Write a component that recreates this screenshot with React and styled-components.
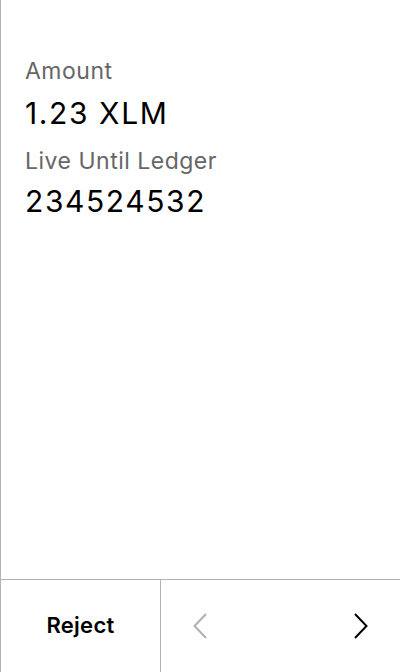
import React from "react";
import styled, { createGlobalStyle } from "styled-components";

const Global = createGlobalStyle`
  html, body { margin: 0; padding: 0; background: #fff; }
  body { font-family: Inter, "Noto Sans", sans-serif; }
`;

const Screen = styled.div`
  width: 400px;
  height: 672px;
  box-sizing: border-box;
  border-left: 1px solid #b3b3b3;
  display: flex;
  flex-direction: column;
  background: #fff;
`;

const Content = styled.div`
  flex: 1;
  padding: 57px 0 0 24px;
  display: flex;
  flex-direction: column;
`;

const Label = styled.div`
  font-size: 23px;
  line-height: 28px;
  letter-spacing: 0.5px;
  color: #666;
  margin-bottom: ${(p) => p.$gap || 0}px;
`;

const Value = styled.div`
  font-size: 30px;
  line-height: 36px;
  letter-spacing: 1.6px;
  color: #000;
  margin-bottom: ${(p) => p.$gap || 0}px;
`;

const Footer = styled.div`
  height: 92px;
  border-top: 1px solid #b3b3b3;
  display: flex;
`;

const RejectButton = styled.div`
  width: 160px;
  box-sizing: border-box;
  padding-bottom: 2px;
  border-right: 1px solid #b3b3b3;
  display: flex;
  align-items: center;
  justify-content: center;
  font-size: 22px;
  font-weight: 600;
  letter-spacing: 0.3px;
  color: #000;
`;

const Nav = styled.div`
  flex: 1;
  display: flex;
  align-items: center;
  justify-content: space-between;
  padding: 0 32px 0 32px;
`;

const Chevron = ({ dir, color }) => (
  <svg width="14" height="26" viewBox="0 0 14 26">
    <path
      d={dir === "left" ? "M13 1 L1.5 13 L13 25" : "M1 1 L12.5 13 L1 25"}
      fill="none"
      stroke={color}
      strokeWidth="2"
    />
  </svg>
);

export default function App() {
  return (
    <>
      <Global />
      <Screen>
        <Content>
          <Label $gap={10}>Amount</Label>
          <Value $gap={16}>1.23 XLM</Value>
          <Label $gap={8}>Live Until Ledger</Label>
          <Value>234524532</Value>
        </Content>
        <Footer>
          <RejectButton>Reject</RejectButton>
          <Nav>
            <Chevron dir="left" color="#b0b0b0" />
            <Chevron dir="right" color="#000" />
          </Nav>
        </Footer>
      </Screen>
    </>
  );
}
